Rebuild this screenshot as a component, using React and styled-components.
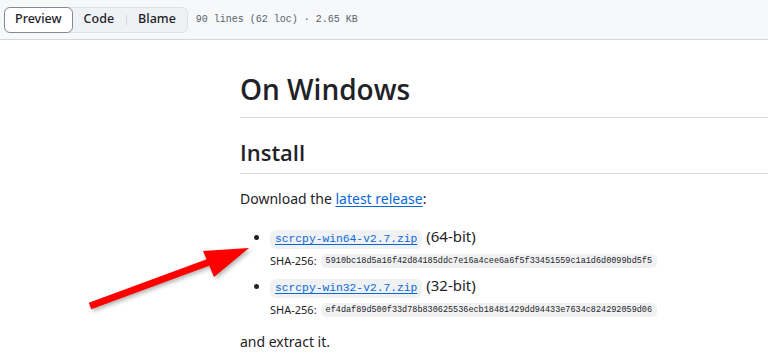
import React from 'react';
import styled, { createGlobalStyle } from 'styled-components';

const GlobalStyle = createGlobalStyle`
  html, body {
    margin: 0;
    padding: 0;
    background: #ffffff;
    overflow: hidden;
  }
  body {
    font-family: "Noto Sans", "Open Sans", sans-serif;
    color: #1f2328;
  }
`;

const Page = styled.div`
  position: relative;
  width: 768px;
  height: 356px;
  overflow: hidden;
`;

const Toolbar = styled.div`
  display: flex;
  align-items: center;
  gap: 8px;
  height: 40px;
  padding-left: 4px;
  box-sizing: border-box;
  background: #f6f8fa;
  border-bottom: 1px solid #d1d9e0;
`;

const Segmented = styled.div`
  display: flex;
  align-items: center;
  height: 26px;
  box-sizing: border-box;
  background: #eff2f5;
  border: 1px solid #dde2e7;
  border-radius: 6px;
`;

const Segment = styled.button`
  height: ${({ $active }) => ($active ? '26px' : '24px')};
  margin: ${({ $active }) => ($active ? '0 -1px' : '0')};
  padding: 0 ${({ $w }) => $w}px;
  box-sizing: border-box;
  border: ${({ $active }) => ($active ? '1px solid #818b98' : 'none')};
  border-radius: 6px;
  background: ${({ $active }) => ($active ? '#ffffff' : 'transparent')};
  font-family: "Noto Sans", sans-serif;
  font-size: 12.5px;
  font-weight: 500;
  color: #1f2328;
  line-height: 1;
`;

const Divider = styled.span`
  width: 1px;
  height: 10px;
  background: #d1d9e0;
`;

const FileInfo = styled.span`
  font-family: "Liberation Mono", monospace;
  font-size: 10px;
  color: #59636e;
`;

const Article = styled.div`
  padding-left: 240px;
`;

const H1 = styled.h1`
  margin: 29px 0 0;
  padding-bottom: 8px;
  font-family: "Open Sans", "Noto Sans", sans-serif;
  font-size: 28px;
  line-height: 40px;
  font-weight: 600;
  border-bottom: 1px solid #d1d9e0;
`;

const H2 = styled.h2`
  margin: 19px 0 0;
  padding-bottom: 6px;
  font-family: "Open Sans", "Noto Sans", sans-serif;
  font-size: 22px;
  line-height: 30px;
  font-weight: 600;
  border-bottom: 1px solid #d1d9e0;
`;

const Para = styled.p`
  margin: ${({ $top }) => $top}px 0 0;
  font-size: 14px;
  line-height: 24px;
`;

const Link = styled.a`
  color: #0969da;
  text-decoration: underline;
  text-underline-offset: 2px;
`;

const List = styled.ul`
  margin: 13px 0 0;
  padding-left: 30px;
  list-style: disc;
  font-size: 15px;
`;

const Item = styled.li`
  &::marker {
    font-size: 13px;
  }
`;

const ItemLine = styled.div`
  line-height: 24px;
  height: 24px;
`;

const Chip = styled.a`
  display: inline-block;
  padding: 0 5px;
  line-height: 19px;
  border-radius: 6px;
  background: #eff1f3;
  font-family: "Liberation Mono", monospace;
  font-size: 11.3px;
  color: #0969da;
  text-decoration: underline;
  text-underline-offset: 2px;
`;

const ShaLine = styled.div`
  display: flex;
  align-items: center;
  gap: 4px;
  height: 25px;
  font-size: 11px;
  color: #1f2328;
`;

const ShaCode = styled.code`
  padding: 0 5px;
  line-height: 14px;
  border-radius: 5px;
  background: #eff1f3;
  font-family: "Liberation Mono", monospace;
  font-size: 8.5px;
  color: #1f2328;
`;

const Arrow = styled.svg`
  position: absolute;
  left: 0;
  top: 0;
  width: 768px;
  height: 356px;
  pointer-events: none;
  filter: drop-shadow(2px 2px 2px rgba(0, 0, 0, 0.3));
`;

const downloads = [
  {
    name: 'scrcpy-win64-v2.7.zip',
    bits: '(64-bit)',
    sha: '5910bc18d5a16f42d84185ddc7e16a4cee6a6f5f33451559c1a1d6d0099bd5f5',
  },
  {
    name: 'scrcpy-win32-v2.7.zip',
    bits: '(32-bit)',
    sha: 'ef4daf89d500f33d78b830625536ecb18481429dd94433e7634c824292059d06',
  },
];

export default function App() {
  return (
    <Page>
      <GlobalStyle />
      <Toolbar>
        <Segmented>
          <Segment $active $w={10}>Preview</Segment>
          <Segment $w={12}>Code</Segment>
          <Divider />
          <Segment $w={11}>Blame</Segment>
        </Segmented>
        <FileInfo>90 lines (62 loc) · 2.65 KB</FileInfo>
      </Toolbar>

      <Article>
        <H1>On Windows</H1>
        <H2>Install</H2>
        <Para $top={13}>
          Download the <Link href="#">latest release</Link>:
        </Para>
        <List>
          {downloads.map((d) => (
            <Item key={d.name}>
              <ItemLine>
                <Chip href="#">{d.name}</Chip> {d.bits}
              </ItemLine>
              <ShaLine>
                SHA-256: <ShaCode>{d.sha}</ShaCode>
              </ShaLine>
            </Item>
          ))}
        </List>
        <Para $top={8}>and extract it.</Para>
      </Article>

      <Arrow viewBox="0 0 768 356">
        <line x1="90" y1="306" x2="212" y2="261" stroke="#ff0000" strokeWidth="7" />
        <polygon points="249,248 203,251 214,277" fill="#ff0000" />
      </Arrow>
    </Page>
  );
}
